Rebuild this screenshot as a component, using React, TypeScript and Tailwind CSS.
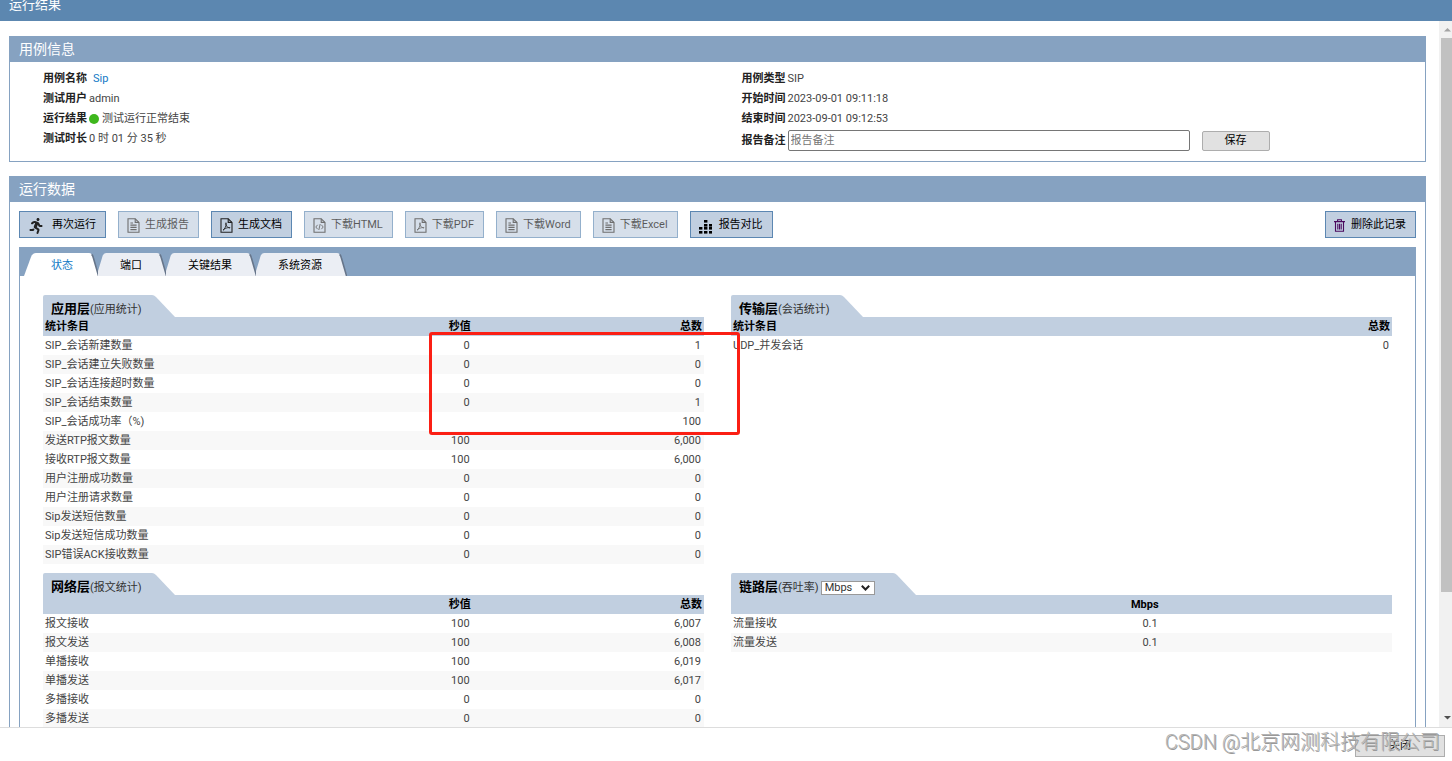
import React, { useState } from "react";
import { FaRunning } from "react-icons/fa";

type Row = { name: string; rate?: string; total?: string };

const appRows: Row[] = [
  { name: "SIP_会话新建数量", rate: "0", total: "1" },
  { name: "SIP_会话建立失败数量", rate: "0", total: "0" },
  { name: "SIP_会话连接超时数量", rate: "0", total: "0" },
  { name: "SIP_会话结束数量", rate: "0", total: "1" },
  { name: "SIP_会话成功率（%)", total: "100" },
  { name: "发送RTP报文数量", rate: "100", total: "6,000" },
  { name: "接收RTP报文数量", rate: "100", total: "6,000" },
  { name: "用户注册成功数量", rate: "0", total: "0" },
  { name: "用户注册请求数量", rate: "0", total: "0" },
  { name: "Sip发送短信数量", rate: "0", total: "0" },
  { name: "Sip发送短信成功数量", rate: "0", total: "0" },
  { name: "SIP错误ACK接收数量", rate: "0", total: "0" },
];

const netRows: Row[] = [
  { name: "报文接收", rate: "100", total: "6,007" },
  { name: "报文发送", rate: "100", total: "6,008" },
  { name: "单播接收", rate: "100", total: "6,019" },
  { name: "单播发送", rate: "100", total: "6,017" },
  { name: "多播接收", rate: "0", total: "0" },
  { name: "多播发送", rate: "0", total: "0" },
];

const transportRows: Row[] = [{ name: "UDP_并发会话", total: "0" }];

const linkRows: Row[] = [
  { name: "流量接收", rate: "0.1" },
  { name: "流量发送", rate: "0.1" },
];

function FileIcon({ kind }: { kind: "text" | "pdf" | "code" }) {
  return (
    <svg className="mt-0.5 h-[15px] w-[13px] shrink-0" viewBox="0 0 13 15" fill="none" stroke="#222" strokeWidth="1.1">
      <path d="M1 .8H8.2L12 4.4V14.2H1Z" />
      <path d="M8.2 .8V4.4H12" />
      {kind === "text" && <path d="M3.4 5H6M3.4 7.2H9.6M3.4 9.4H9.6M3.4 11.6H9.6" strokeWidth="1.2" />}
      {kind === "pdf" && (
        <path d="M3 12.2C4.6 11.4 6.6 7.4 6.2 5.2C5.9 4 5.3 5.4 6 7C6.8 8.8 8.4 10 10 10C10.6 9.2 6.6 9 3 12.2Z" strokeWidth=".9" />
      )}
      {kind === "code" && <path d="M4.6 6.8L2.8 9L4.6 11.2M8.4 6.8L10.2 9L8.4 11.2M7.2 6L5.8 12" strokeWidth=".9" />}
    </svg>
  );
}

function DotsIcon() {
  const dots = [
    [5, 0], [5, 4], [10, 4], [0, 7], [5, 7], [10, 7], [0, 11], [5, 11], [10, 11],
  ];
  return (
    <svg className="mt-1 mr-0.5 h-[14px] w-[13px] shrink-0" viewBox="0 0 13 14">
      {dots.map(([x, y]) => (
        <rect key={`${x}-${y}`} x={x} y={y} width="3.4" height="2.6" />
      ))}
    </svg>
  );
}

function TrashIcon() {
  return (
    <svg className="mt-0.5 mr-px h-[13px] w-[11px] shrink-0" viewBox="0 0 11 13" fill="none" stroke="#4b0a5e" strokeWidth="1.1">
      <path d="M0 2.6H11M3.6 2.4V.7H7.4V2.4M1.5 2.8V12.2H9.5V2.8M3.8 4.8V10.4M5.5 4.8V10.4M7.2 4.8V10.4" />
    </svg>
  );
}

function ToolButton({ icon, label, disabled }: { icon: React.ReactNode; label: string; disabled?: boolean }) {
  return (
    <button
      type="button"
      disabled={disabled}
      className="flex h-[27px] items-center gap-[5px] border border-[#5c87b2] bg-[#c1cfe0] pr-[9px] pl-2 whitespace-nowrap text-black disabled:opacity-65"
    >
      {icon}
      <span>{label}</span>
    </button>
  );
}

function Tab({ label, active, onClick }: { label: string; active: boolean; onClick: () => void }) {
  const fill = active ? "#ffffff" : "#ebeef4";
  return (
    <button
      type="button"
      role="tab"
      aria-selected={active}
      onClick={onClick}
      className={active ? "flex h-[23px] text-[#1279c6]" : "flex h-[23px] text-black"}
    >
      <svg className={active ? "h-[23px] w-3" : "h-[23px] w-2"} viewBox={active ? "0 0 12 23" : "0 0 8 23"}>
        <path d={active ? "M0 23L7 4Q8.500 0 12 0V23Z" : "M0 23V18L4 5Q5 0 8 0V23Z"} fill={fill} />
      </svg>
      <span
        className={
          active ? "h-[23px] bg-white px-[15px] leading-[26px]" : "h-[23px] bg-[#ebeef4] px-[14px] leading-[26px]"
        }
      >
        {label}
      </span>
      <svg className="-mr-px h-[23px] w-[11px]" viewBox="0 0 11 23">
        <path d="M0 0H1Q4 0 5 4L11 23H0Z" fill={fill} />
        <path d="M3.500 1.500Q4.800 2 5.400 5L10.600 23" fill="none" stroke="#66758a" strokeWidth="1.600" />
      </svg>
    </button>
  );
}

function StatCard({
  title,
  note,
  extra,
  heads,
  rows,
}: {
  title: string;
  note: string;
  extra?: React.ReactNode;
  heads: string[];
  rows: Row[];
}) {
  return (
    <section>
      <div className="flex h-[22px]">
        <div className="flex items-center rounded-tl-xs bg-[#c1cfe0] pr-2.5 pl-2">
          <h3 className="pt-1.5 text-[13px] leading-4 font-bold text-black">
            {title}
            <span className="text-[11px] font-normal text-[#333]">({note})</span>
          </h3>
          {extra}
        </div>
        <svg className="h-[22px] w-[23px]" viewBox="0 0 23 22">
          <path d="M0 0Q2 0 4 2L23 22H0Z" fill="#c1cfe0" />
        </svg>
      </div>
      <table className="w-full table-fixed border-collapse">
        <thead className="bg-[#c1cfe0] text-black">
          <tr className="h-[19px]">
            <th className="w-[65%] p-0">
              <div className="flex justify-between px-0.5">
                <span>{heads[0]}</span>
                <span>{heads[1]}</span>
              </div>
            </th>
            <th className="px-0.5 py-0 text-right">{heads[2]}</th>
          </tr>
        </thead>
        <tbody>
          {rows.map((row) => (
            <tr key={row.name} className="h-[19px] even:bg-[#f8f8f8]">
              <td className="p-0">
                <div className="flex justify-between pr-[3px] pl-0.5">
                  <span>{row.name}</span>
                  <span>{row.rate}</span>
                </div>
              </td>
              <td className="py-0 pr-[3px] text-right">{row.total}</td>
            </tr>
          ))}
        </tbody>
      </table>
    </section>
  );
}

function InfoRow({ label, children }: { label: string; children: React.ReactNode }) {
  return (
    <div className="flex h-5 items-center gap-0.5">
      <dt className="font-bold text-[#222]">{label}</dt>
      <dd className="flex items-center">{children}</dd>
    </div>
  );
}

export default function App() {
  const tabs = ["状态", "端口", "关键结果", "系统资源"];
  const [tab, setTab] = useState(0);

  return (
    <div className="flex h-screen flex-col overflow-hidden bg-white font-['Roboto','Noto_Sans_CJK_SC',sans-serif] text-[11px] leading-4 text-[#444]">
      <header className="flex h-[21px] shrink-0 items-start overflow-hidden bg-[#5c87b0] pl-[9px]">
        <h1 className="-mt-1 text-[13px] leading-[18px] text-white">运行结果</h1>
      </header>

      <div className="flex min-h-0 flex-1">
        <main className="min-w-0 flex-1 overflow-hidden pt-[15px] pr-[13px] pl-[9px]">
          <section className="border border-t-0 border-[#86a2c1]">
            <h2 className="-mx-px h-[26px] bg-[#86a2c1] pl-2.5 text-[14px] leading-[26px] text-white">用例信息</h2>
            <div className="grid grid-cols-2 pt-[7px] pb-2.5">
              <dl className="pl-[33px]">
                <InfoRow label="用例名称">
                  <a href="#sip" className="ml-1 text-[#1279c6]">Sip</a>
                </InfoRow>
                <InfoRow label="测试用户">admin</InfoRow>
                <InfoRow label="运行结果">
                  <span className="mr-[3px] size-[10px] rounded-full bg-[#3eb71d]" />
                  测试运行正常结束
                </InfoRow>
                <InfoRow label="测试时长">0 时 01 分 35 秒</InfoRow>
              </dl>
              <div className="pl-6">
                <dl>
                  <InfoRow label="用例类型">SIP</InfoRow>
                  <InfoRow label="开始时间">2023-09-01 09:11:18</InfoRow>
                  <InfoRow label="结束时间">2023-09-01 09:12:53</InfoRow>
                </dl>
                <div className="mt-px flex items-center">
                  <label htmlFor="remark" className="mr-0.5 font-bold text-[#222]">报告备注</label>
                  <input
                    id="remark"
                    type="text"
                    placeholder="报告备注"
                    className="h-[21px] w-[402px] rounded-xs border border-[#767676] px-0.5 placeholder:text-[#757575]"
                  />
                  <button type="button" className="ml-3 h-5 w-[68px] rounded-xs border border-[#adadad] bg-[#e1e1e1] text-black">
                    保存
                  </button>
                </div>
              </div>
            </div>
          </section>

          <section className="mt-3.5 border border-t-0 border-[#86a2c1]">
            <h2 className="-mx-px h-[26px] bg-[#86a2c1] pl-2.5 text-[14px] leading-[26px] text-white">运行数据</h2>
            <div className="px-[9px] pt-[9px]">
              <div className="flex items-center justify-between">
                <div className="flex gap-3">
                  <ToolButton icon={<FaRunning className="mt-0.5 mr-[3px] size-4 text-[#222]" />} label="再次运行" />
                  <ToolButton icon={<FileIcon kind="text" />} label="生成报告" disabled />
                  <ToolButton icon={<FileIcon kind="pdf" />} label="生成文档" />
                  <ToolButton icon={<FileIcon kind="code" />} label="下载HTML" disabled />
                  <ToolButton icon={<FileIcon kind="pdf" />} label="下载PDF" disabled />
                  <ToolButton icon={<FileIcon kind="text" />} label="下载Word" disabled />
                  <ToolButton icon={<FileIcon kind="text" />} label="下载Excel" disabled />
                  <ToolButton icon={<DotsIcon />} label="报告对比" />
                </div>
                <ToolButton icon={<TrashIcon />} label="删除此记录" />
              </div>

              <div role="tablist" className="mt-[9px] flex h-[29px] items-end bg-[#86a2c1] pl-[5px]">
                {tabs.map((name, i) => (
                  <Tab key={name} label={name} active={i === tab} onClick={() => setTab(i)} />
                ))}
              </div>

              <div className="border border-t-0 border-[#86a2c1] px-[23px] pt-[19px] pb-6">
                <div className="grid grid-cols-2 gap-x-[27px] gap-y-[9px]">
                  <div className="relative">
                    <StatCard title="应用层" note="应用统计" heads={["统计条目", "秒值", "总数"]} rows={appRows} />
                    <div className="pointer-events-none absolute top-[37px] left-[386px] h-[103px] w-[311px] rounded-[3px] border-3 border-[#fb1f14]" />
                  </div>
                  <StatCard title="传输层" note="会话统计" heads={["统计条目", "", "总数"]} rows={transportRows} />
                  <StatCard title="网络层" note="报文统计" heads={["", "秒值", "总数"]} rows={netRows} />
                  <StatCard
                    title="链路层"
                    note="吞吐率"
                    heads={["", "Mbps", ""]}
                    rows={linkRows}
                    extra={
                      <span className="relative mt-2 mr-2 ml-0.5 flex">
                        <select
                          aria-label="单位"
                          defaultValue="Mbps"
                          className="h-3.5 w-[54px] appearance-none border border-[#999] bg-white pl-[3px] leading-3 text-[#333]"
                        >
                          <option>Mbps</option>
                          <option>Kbps</option>
                        </select>
                        <svg
                          className="pointer-events-none absolute top-1 right-[5px] h-1.5 w-[9px]"
                          viewBox="0 0 9 6"
                          fill="none"
                          stroke="#222"
                          strokeWidth="2"
                        >
                          <path d="M.8 .8L4.500 4.500L8.200 .8" />
                        </svg>
                      </span>
                    }
                  />
                </div>
              </div>
            </div>
          </section>
        </main>

        <div className="flex w-[13px] shrink-0 flex-col bg-[#f1f1f1]">
          <svg className="h-[17px] w-[13px]" viewBox="0 0 13 17">
            <path d="M8.500 7L12 10.500H5Z" fill="#a3a3a3" />
          </svg>
          <div className="ml-0.5 h-[554px] bg-[#c1c1c1]" />
          <svg className="mt-auto h-[17px] w-[13px]" viewBox="0 0 13 17">
            <path d="M5 6H12L8.500 9.500Z" fill="#505050" />
          </svg>
        </div>
      </div>

      <footer className="relative flex h-[34px] shrink-0 items-start justify-end border-t border-[#ddd] pt-[7px] pr-[7px]">
        <button type="button" className="h-[22px] w-[90px] border border-[#adadad] bg-[#e1e1e1] text-black">
          关闭
        </button>
        <p className="pointer-events-none absolute top-0 right-3 text-[20px] leading-7 font-light whitespace-nowrap text-[#b4b4b4] text-shadow-[1px_1px_0_#999]">
          CSDN @北京网测科技有限公司
        </p>
      </footer>
    </div>
  );
}
